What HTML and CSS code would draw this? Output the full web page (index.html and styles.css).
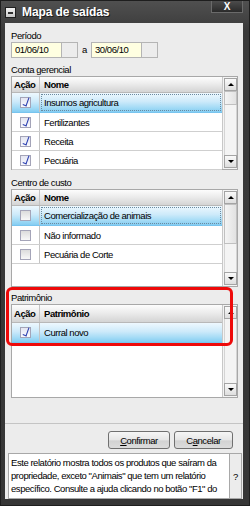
FILE: index.html
```html
<!DOCTYPE html>
<html lang="pt-BR">
<head>
  <meta charset="UTF-8">
  <title>Mapa de saídas</title>
  <link rel="stylesheet" href="styles.css">
</head>
<body>
  <div class="window">
    <div class="titlebar">
      <span class="sys-icon"></span>
      <span class="title">Mapa de saídas</span>
      <span class="close">X</span>
    </div>

    <div class="client">
      <div class="form">
        <div class="label">Período</div>
        <div class="dates">
          <span class="date">01/06/10</span><span class="date-btn"></span>
          <span class="date-sep">a</span>
          <span class="date">30/06/10</span><span class="date-btn"></span>
        </div>

        <div class="label gap-5">Conta gerencial</div>
        <div class="grid">
          <div class="grid-body">
            <div class="row head"><div class="c-acao">Ação</div><div class="c-nome">Nome</div></div>
            <div class="row sel"><div class="c-acao"><span class="chk on"></span></div><div class="c-nome focus">Insumos agricultura</div></div>
            <div class="row"><div class="c-acao"><span class="chk on"></span></div><div class="c-nome">Fertilizantes</div></div>
            <div class="row"><div class="c-acao"><span class="chk on"></span></div><div class="c-nome">Receita</div></div>
            <div class="row"><div class="c-acao"><span class="chk on"></span></div><div class="c-nome">Pecuária</div></div>
          </div>
          <div class="scroll">
            <div class="sb-btn up"></div>
            <div class="sb-track"><div class="sb-thumb"></div></div>
            <div class="sb-btn down"></div>
          </div>
        </div>

        <div class="label gap-6">Centro de custo</div>
        <div class="grid tall">
          <div class="grid-body">
            <div class="row head"><div class="c-acao">Ação</div><div class="c-nome">Nome</div></div>
            <div class="row sel"><div class="c-acao"><span class="chk"></span></div><div class="c-nome focus">Comercialização de animais</div></div>
            <div class="row"><div class="c-acao"><span class="chk"></span></div><div class="c-nome">Não informado</div></div>
            <div class="row"><div class="c-acao"><span class="chk"></span></div><div class="c-nome">Pecuária de Corte</div></div>
          </div>
          <div class="scroll">
            <div class="sb-btn up"></div>
            <div class="sb-track"><div class="sb-thumb long"></div></div>
            <div class="sb-btn down"></div>
          </div>
        </div>

        <div class="patrimonio">
          <div class="label">Patrimônio</div>
          <div class="grid">
            <div class="grid-body">
              <div class="row head big"><div class="c-acao">Ação</div><div class="c-nome">Patrimônio</div></div>
              <div class="row sel"><div class="c-acao"><span class="chk on"></span></div><div class="c-nome">Curral novo</div></div>
            </div>
            <div class="scroll">
              <div class="sb-btn up"></div>
              <div class="sb-track"></div>
              <div class="sb-btn down"></div>
            </div>
          </div>
          <div class="highlight"></div>
        </div>
      </div>

      <div class="actions">
        <button class="btn confirm"><u>C</u>onfirmar</button>
        <button class="btn cancel">C<u>a</u>ncelar</button>
      </div>

      <div class="info">
        <div class="info-text">
          Este relatório mostra todos os produtos que saíram da<br>
          propriedade, exceto "Animais" que tem um relatório<br>
          específico. Consulte a ajuda clicando no botão "F1" do
        </div>
        <div class="info-help">?</div>
      </div>
    </div>
  </div>
</body>
</html>
```

FILE: styles.css
```css
body {
  margin: 0;
  font-family: 'Liberation Sans', Arial, sans-serif;
  font-size: 9.5px;
  letter-spacing: -0.45px;
  color: #000;
}

.window {
  width: 250px;
  height: 506px;
  box-sizing: border-box;
  border: 1px solid #1e1e1e;
  background: linear-gradient(#505050, #3a3a3a 30px, #363636);
  display: flex;
  flex-direction: column;
}

/* title bar */
.titlebar {
  height: 22px;
  flex: none;
  display: flex;
  align-items: center;
  padding-left: 4px;
}

.sys-icon {
  width: 9px;
  height: 9px;
  background: linear-gradient(#f4f4f4, #c8c8c8);
  border: 1px solid #202020;
  position: relative;
}

.sys-icon::after {
  content: '';
  position: absolute;
  left: 2px;
  top: 4px;
  width: 5px;
  height: 2px;
  background: #303030;
}

.title {
  margin-left: 6px;
  color: #fff;
  font-weight: bold;
  font-size: 12px;
  letter-spacing: -0.1px;
  text-shadow: 1px 1px 0 #1a1a1a;
}

.close {
  margin-left: auto;
  margin-right: 6px;
  align-self: flex-start;
  width: 30px;
  height: 11px;
  border: 1px solid #6a6a6a;
  border-top: none;
  background: linear-gradient(#4c4c4c, #2a2a2a);
  color: #fff;
  font-weight: bold;
  font-size: 10px;
  line-height: 11px;
  letter-spacing: 0;
  text-align: center;
}

/* client area */
.client {
  flex: 1;
  margin: 0 6px 6px 4px;
  background: #ececec;
  display: flex;
  flex-direction: column;
}

.form {
  flex: 1;
  padding: 6px 5px 0 6px;
}

.label {
  height: 13px;
  line-height: 13px;
}

.gap-5 {
  margin-top: 5px;
}

.gap-6 {
  margin-top: 6px;
}

.dates {
  display: flex;
  height: 16px;
}

.date {
  width: 46px;
  padding-left: 3px;
  border: 1px solid #b4b4b4;
  background: #ffffe1;
  line-height: 14px;
}

.date-btn {
  width: 15px;
  border: 1px solid #b4b4b4;
  border-left: none;
  background: #ececec;
}

.date-sep {
  width: 13px;
  text-align: center;
  line-height: 16px;
}

/* grids */
.grid {
  height: 94px;
  box-sizing: border-box;
  border: 1px solid #a8a8a8;
  background: #fff;
  display: flex;
}

.grid.tall {
  height: 98px;
}

.grid-body {
  flex: 1;
}

.row {
  display: flex;
  height: 19px;
  box-sizing: border-box;
  border-bottom: 1px solid #cfcfcf;
}

.row.head {
  height: 16px;
  font-weight: bold;
  background: linear-gradient(#fdfdfd, #ececec 45%, #d4d4d4);
  border-bottom: 1px solid #b8b8b8;
}

.row.head.big {
  height: 18px;
}

.row.sel {
  height: 20px;
  background: linear-gradient(#eef8fe, #cdeafa 45%, #a6dcf6 75%, #84cdf2);
  border-bottom: 1px solid #78c4ee;
}

.c-acao {
  width: 27px;
  border-right: 1px solid #c4c4c4;
  display: flex;
  align-items: center;
  justify-content: center;
}

.head .c-acao {
  justify-content: flex-start;
  padding-left: 2px;
  width: 25px;
}

.c-nome {
  flex: 1;
  display: flex;
  align-items: center;
  padding-left: 4px;
}

.c-nome.focus {
  outline: 1px dotted #6a8aa0;
  outline-offset: -2px;
}

.chk {
  width: 9px;
  height: 9px;
  border: 1px solid #a4a4b8;
  background: linear-gradient(#dcdcdc, #f8f8f8);
  position: relative;
}

.chk.on {
  background: linear-gradient(#e4e6f2, #fafafe);
}

.chk.on::after {
  content: '';
  position: absolute;
  left: 3px;
  top: -1px;
  width: 3px;
  height: 8px;
  border-right: 1px solid #2a3fb0;
  border-bottom: 1px solid #2a3fb0;
  transform: rotate(20deg);
}

/* scrollbars */
.scroll {
  width: 13px;
  border-left: 1px solid #c8c8c8;
  background: #f4f4f4;
  display: flex;
  flex-direction: column;
  padding: 1px 0 1px 1px;
}

.sb-btn {
  height: 11px;
  border: 1px solid #a4a4a4;
  background: linear-gradient(#fafafa, #dedede);
  position: relative;
}

.sb-btn::after {
  content: '';
  position: absolute;
  left: 3px;
  top: 4px;
  border-left: 3px solid transparent;
  border-right: 3px solid transparent;
}

.sb-btn.up::after {
  border-bottom: 3px solid #000;
}

.sb-btn.down::after {
  border-top: 3px solid #000;
}

.sb-track {
  flex: 1;
  border-left: 1px solid #d4d4d4;
  border-right: 1px solid #d4d4d4;
}

.sb-thumb {
  height: 12px;
  border: 1px solid #c0c0c0;
  margin: 0 -1px;
  background: linear-gradient(90deg, #f4f4f4, #e2e2e2);
}

.sb-thumb.long {
  height: 38px;
}

/* highlighted section */
.patrimonio {
  position: relative;
  margin-top: 4px;
}

.highlight {
  position: absolute;
  left: -5px;
  right: 5px;
  top: -4px;
  height: 53px;
  border: 3px solid #ee0a0a;
  border-radius: 6px;
}

/* buttons */
.actions {
  flex: none;
  display: flex;
  justify-content: flex-end;
  gap: 4px;
  border-top: 1px solid #c4c4c4;
  padding: 7px 10px 4px 0;
}

.btn {
  height: 18px;
  padding: 0;
  border: 1px solid #707070;
  border-radius: 3px;
  background: linear-gradient(#f6f6f6, #e6e6e6 50%, #d2d2d2 55%, #dcdcdc);
  font-family: inherit;
  font-size: 9.5px;
  letter-spacing: -0.45px;
  color: #000;
}

.btn.confirm {
  width: 62px;
}

.btn.cancel {
  width: 59px;
}

/* help text */
.info {
  flex: none;
  height: 46px;
  display: flex;
  margin: 0 1px 0 3px;
}

.info-text {
  flex: 1;
  background: #fff;
  border: 1px solid #a8a8a8;
  padding: 2px 2px 0 2px;
  line-height: 13px;
  overflow: hidden;
  white-space: nowrap;
}

.info-help {
  width: 11px;
  border: 1px solid #a8a8a8;
  border-left: none;
  display: flex;
  align-items: center;
  justify-content: center;
}
```
